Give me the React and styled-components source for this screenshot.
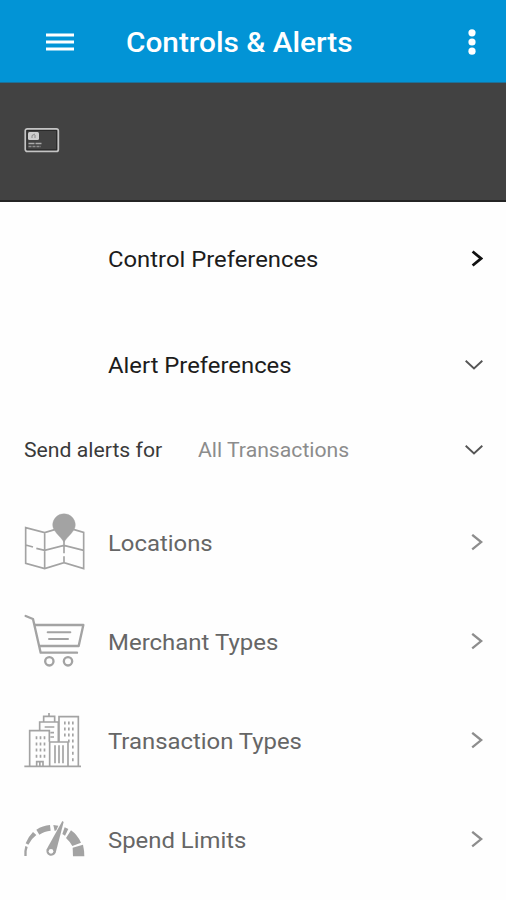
import React from "react";
import styled, { createGlobalStyle } from "styled-components";

const GlobalStyle = createGlobalStyle`
  * { box-sizing: border-box; }
  body { margin: 0; background: #fefefe; font-family: Roboto, "Liberation Sans", sans-serif; }
`;

const Screen = styled.div`
  display: flex;
  flex-direction: column;
  width: 506px;
  height: 900px;
  overflow: hidden;
  background: #fefefe;
`;

const TopBar = styled.header`
  display: flex;
  align-items: center;
  height: 83px;
  padding: 0 29px 0 46px;
  background: #0294d6;
  border-bottom: 1px solid #1d7098;
`;

const MenuIcon = styled.svg`
  width: 28px;
  height: 18px;
  margin: 1px 52px 0 0;
`;

const Title = styled.h1`
  flex: 1;
  margin: 0;
  padding-top: 3px;
  font-size: 28px;
  font-weight: 500;
  line-height: 34px;
  color: #fff;
  white-space: nowrap;
  transform: scaleX(1.064);
  transform-origin: left center;
`;

const DotsIcon = styled.svg`
  width: 10px;
  height: 28px;
  margin-top: 1px;
`;

const CardPanel = styled.section`
  display: flex;
  align-items: flex-start;
  height: 119px;
  padding: 44px 24px 0;
  background: #424242;
  border-bottom: 2px solid #242424;
`;

const CardIcon = styled.svg`
  width: 36px;
  height: 26px;
`;

const PreferenceRow = styled.div`
  display: flex;
  align-items: center;
  justify-content: space-between;
  height: ${(p) => p.$height}px;
  padding: 0 23px 0 108px;
`;

const FilterRow = styled.div`
  display: flex;
  align-items: center;
  height: 72px;
  padding: 0 23px 0 24px;
`;

const CategoryRow = styled.li`
  display: flex;
  align-items: center;
  height: 99px;
  padding: 0 23px 0 10px;
`;

const CategoryList = styled.ul`
  margin: 7px 0 0;
  padding: 0;
  list-style: none;
`;

const Label = styled.span`
  padding-top: 2px;
  font-size: 22px;
  line-height: 28px;
  color: ${(p) => p.$color};
  white-space: nowrap;
  transform: scaleX(${(p) => p.$stretch});
  transform-origin: left center;
`;

const CategoryLabel = styled(Label)`
  flex: 1;
  margin-left: 8px;
`;

const FilterName = styled(Label)`
  width: 174px;
  padding-top: 0;
  font-size: 20px;
`;

const FilterValue = styled(Label)`
  flex: 1;
  padding-top: 0;
  font-size: 20px;
`;

const Drawing = styled.svg`
  flex: none;
  width: 90px;
  height: 85px;
  fill: none;
  stroke: #a3a3a3;
`;

const Arrow = styled.svg`
  flex: none;
  fill: none;
  stroke: ${(p) => p.$color};
  stroke-width: ${(p) => p.$weight};
`;

function RightArrow({ color = "#8d8d8d", weight = 2.3 }) {
  return (
    <Arrow width="12" height="18" viewBox="0 0 12 18" $color={color} $weight={weight}>
      <path d="M1.2 .8 10.2 8.1 1.2 15.4" />
    </Arrow>
  );
}

function BoldRightArrow() {
  return (
    <Arrow width="12" height="18" viewBox="0 0 12 18" $color="#111" $weight={2.8}>
      <path d="M1.6 1.5 10 8.5 1.6 15.5" />
    </Arrow>
  );
}

function DownArrow() {
  return (
    <Arrow width="18" height="12" viewBox="0 0 18 12" $color="#555" $weight={1.9}>
      <path d="M.7 1.8 9 9.4 17.3 1.8" />
    </Arrow>
  );
}

function MapDrawing() {
  return (
    <Drawing viewBox="0 0 270 255" strokeWidth="5">
      <path d="M134 89 104 98 47 83V190L104 206 162 188 221 206V97L190 88M104 98V206M47 135 69 141M79 145 104 151 162 136 221 151M162 122V160M162 169V188" />
      <path d="M162 127C151 108 128 94 128 75A34 34 0 0 1 196 75C196 94 173 108 162 127Z" fill="#a3a3a3" strokeWidth="1" />
    </Drawing>
  );
}

function CartDrawing() {
  return (
    <Drawing viewBox="0 -3 270 255" strokeWidth="7" strokeLinecap="round" strokeLinejoin="round">
      <path d="M47 48 69 57 92 158H201M76 75H220L206 138H89" />
      <path d="M113 97H181M117 117H174" strokeWidth="6" />
      <circle cx="118" cy="184" r="12.5" />
      <circle cx="174" cy="184" r="12.5" />
    </Drawing>
  );
}

function BuildingDrawing() {
  return (
    <Drawing viewBox="0 -6 270 255" strokeWidth="5">
      <path d="M43 199H213M59 199V92H118V125M89 92V66H145V125M101 66V49H134V66M117 39V49M147 125V50H205V199M119 199V126H174V199" />
      <path d="M104 81H133M121 98H132M121 111H132" strokeWidth="5" />
      <path d="M77 113H107M77 132H107M77 150H107M77 169H107" strokeWidth="9" strokeDasharray="5 7" />
      <path d="M162 69H193M162 87H193M162 105H193M174 123H193M186 141H193M186 160H193M186 179H193" strokeWidth="9" strokeDasharray="5 7" />
      <path d="M135 136V190M147 136V190M159 136V190" />
      <path d="M80 199V185H99V199M89.5 185V199" />
    </Drawing>
  );
}

function GaugeDrawing() {
  return (
    <Drawing viewBox="0 -9 270 255">
      <g fill="#a3a3a3" stroke="none">
        <path d="M43 168Q42 151 46 138L53 141Q48 154 50 168Z" />
        <path d="M47 130Q55 110 69 96L79 105Q64 116 55 134Z" />
        <path d="M79 89Q98 77 120 75L122 92Q103 93 88 104Z" />
        <path d="M130 75 145 77 139 91 134 93Z" />
        <path d="M164 82 175 87 165 107 157 102Z" />
        <path d="M183 91Q202 104 213 128L187 138Q179 124 168 114Z" />
        <path d="M188 143 219 134Q223 151 223 169H189Z" />
      </g>
      <path d="M157 63 161 66 137 158A14 14 0 1 1 110 148Z" fill="#a3a3a3" stroke="none" />
      <circle cx="123" cy="154" r="7" fill="#fefefe" stroke="none" />
    </Drawing>
  );
}

const categories = [
  { name: "Locations", Icon: MapDrawing, stretch: 1.085 },
  { name: "Merchant Types", Icon: CartDrawing, stretch: 1.09 },
  { name: "Transaction Types", Icon: BuildingDrawing, stretch: 1.085 },
  { name: "Spend Limits", Icon: GaugeDrawing, stretch: 1.085 },
];

export default function App() {
  return (
    <Screen>
      <GlobalStyle />
      <TopBar>
        <MenuIcon viewBox="0 0 28 18" fill="none" stroke="#fff" strokeWidth="2.8">
          <path d="M0 2H28M0 9H28M0 16H28" />
        </MenuIcon>
        <Title>Controls &amp; Alerts</Title>
        <DotsIcon viewBox="0 0 10 28" fill="#fff">
          <circle cx="5" cy="4.8" r="3.6" />
          <circle cx="5" cy="14" r="3.6" />
          <circle cx="5" cy="23.2" r="3.6" />
        </DotsIcon>
      </TopBar>
      <CardPanel>
        <CardIcon viewBox="0 0 36 26" fill="none">
          <rect x="1.3" y="1.8" width="33" height="22.6" rx="2" stroke="#c4c4c4" strokeWidth="1.8" />
          <rect x="3" y="3.5" width="29.6" height="19.2" stroke="#292929" />
          <rect x="4" y="5" width="11" height="8" rx="1.5" fill="#cfcfcf" />
          <path d="M8 11V8.5L11 7M11 8V11" stroke="#8b8b8b" />
          <path d="M4.5 16.5H18" stroke="#aaa" strokeWidth="1.6" strokeDasharray="6 1" />
          <path d="M4.5 19.5H17" stroke="#8e8e8e" strokeWidth="1.3" strokeDasharray="3 1" />
        </CardIcon>
      </CardPanel>
      <PreferenceRow $height={114}>
        <Label $color="#1c1c1c" $stretch={1.083}>Control Preferences</Label>
        <BoldRightArrow />
      </PreferenceRow>
      <PreferenceRow $height={98}>
        <Label $color="#1c1c1c" $stretch={1.083}>Alert Preferences</Label>
        <DownArrow />
      </PreferenceRow>
      <FilterRow>
        <FilterName $color="#3a3a3a" $stretch={1.06}>Send alerts for</FilterName>
        <FilterValue $color="#8c8c8c" $stretch={1.06}>All Transactions</FilterValue>
        <DownArrow />
      </FilterRow>
      <CategoryList>
        {categories.map(({ name, Icon, stretch }) => (
          <CategoryRow key={name}>
            <Icon />
            <CategoryLabel $color="#666" $stretch={stretch}>{name}</CategoryLabel>
            <RightArrow />
          </CategoryRow>
        ))}
      </CategoryList>
    </Screen>
  );
}
